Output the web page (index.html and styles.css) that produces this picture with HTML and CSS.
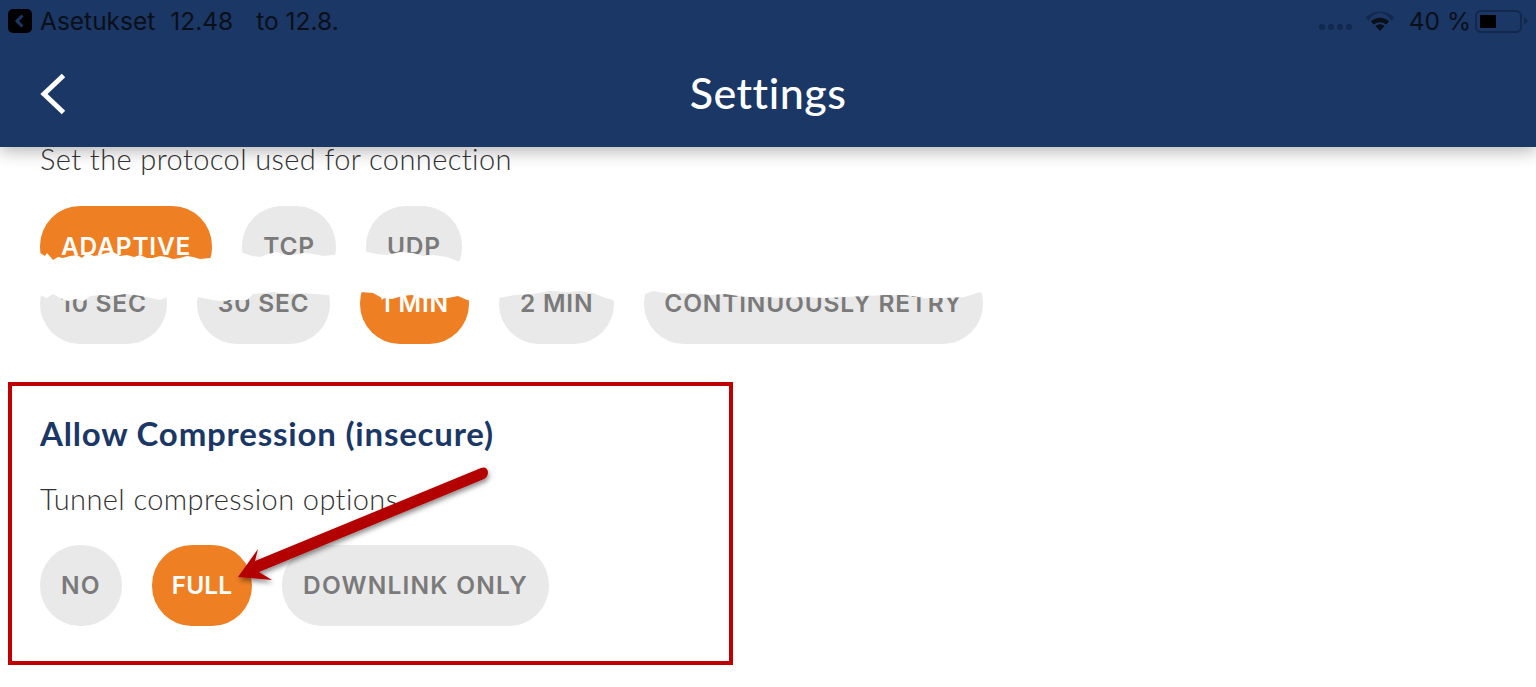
FILE: index.html
```html
<!DOCTYPE html>
<html lang="en">
<head>
  <meta charset="UTF-8">
  <title>Settings</title>
  <link rel="stylesheet" href="styles.css">
</head>
<body>
  <header class="topbar">
    <div class="status">
      <div class="status-left">
        <span class="app-back">
          <svg width="24" height="24" viewBox="0 0 24 24"><path d="M14.5 6.5 9 12l5.500 5.500" fill="none" stroke="#1a3766" stroke-width="3"/></svg>
        </span>
        <span>Asetukset</span>
        <span class="time">12.48</span>
        <span class="note">to 12.8.</span>
      </div>
      <div class="status-right">
        <span class="signal"><i></i><i></i><i></i><i></i></span>
        <svg class="wifi" width="28" height="20" viewBox="0 0 28 20">
          <path d="M0 6.500C8-1.500 20-1.500 28 6.500l-2.600 3C19-.5 9-.5 2.600 9.500z" fill="#12284d"/>
          <path d="M5 10.500c5.500-5 12.500-5 18 0l-3 3c-3.500-3-8.500-3-12 0z" fill="#0a0f18"/>
          <path d="M9.500 15c3-2.300 6-2.300 9 0L14 20z" fill="#0a0f18"/>
        </svg>
        <span class="battery-text">40 %</span>
        <span class="battery"><b></b></span>
      </div>
    </div>
    <nav class="nav">
      <svg class="nav-back" width="26" height="42" viewBox="0 0 26 42"><path d="M23.500 2.500 4 21l19.500 18.500" fill="none" stroke="#fff" stroke-width="5"/></svg>
      <h1>Settings</h1>
    </nav>
  </header>

  <main class="content">
    <p class="desc first">Set the protocol used for connection</p>
    <div class="pills">
      <span class="pill on">ADAPTIVE</span>
      <span class="pill">TCP</span>
      <span class="pill">UDP</span>
    </div>
    <div class="pills second">
      <span class="pill">10 SEC</span>
      <span class="pill">30 SEC</span>
      <span class="pill on">1 MIN</span>
      <span class="pill">2 MIN</span>
      <span class="pill">CONTINUOUSLY RETRY</span>
    </div>

    <section class="box">
      <h2>Allow Compression (insecure)</h2>
      <p class="desc">Tunnel compression options</p>
      <div class="pills">
        <span class="pill">NO</span>
        <span class="pill on full">FULL</span>
        <span class="pill">DOWNLINK ONLY</span>
      </div>
    </section>
  </main>

  <!-- torn edge of the stitched screenshot, and the red arrow on top -->
  <svg class="overlay" width="1536" height="687" viewBox="0 0 1536 687">
    <defs>
      <filter id="arrowShadow" x="-10%" y="-20%" width="120%" height="140%">
        <feDropShadow dx="1" dy="3" stdDeviation="2.500" flood-color="#000" flood-opacity=".45"/>
      </filter>
    </defs>
    <polygon fill="#fff" points="0,262 40,253 45,256 47,253 53,260 58,257 63,258 70,256 77,255 82,258 87,253 94,256 100,255 106,253 113,252 120,256 127,255 134,257 140,255 147,258 153,258 160,256 167,257 173,259 180,258 187,256 193,257 200,259 210,258 214,262 243,253 252,256 260,257 268,254 277,252 285,255 293,255 303,253 313,254 323,256 333,255 367,252 377,254 387,255 400,252 413,253 423,256 433,255 447,257 460,262 1000,262 1000,292 985,296 980,292 965,297 945,298 925,298 905,295 885,295 865,296 845,297 825,298 805,297 785,298 765,297 745,297 725,294 710,295 690,293 670,294 653,291 643,295 613,300 603,297 593,293 580,291 567,292 550,291 533,294 515,295 498,298 467,300 458,296 448,298 436,298 424,299 412,295 402,296 392,299 382,298 373,293 360,292 345,292 327,295 303,293 290,294 273,292 253,294 247,300 230,300 218,301 208,299 197,297 170,296 160,300 146,297 135,295 125,294 113,296 100,295 90,296 84,301 76,299 68,301 60,298 53,294 47,298 40,295 0,300"/>
    <path filter="url(#arrowShadow)" fill="#b30000" d="M238 577 258 549 255 561 481 468Q487 466 488 472 488 477 484 479L259 572 272 580z"/>
  </svg>
</body>
</html>
```

FILE: styles.css
```css
html, body {
  margin: 0;
  height: 687px;
  overflow: hidden;
  background: #fff;
}
body {
  position: relative;
  font-family: "Lato", "Open Sans", sans-serif;
  color: #333;
}
.topbar {
  position: relative;
  z-index: 2;
  height: 147px;
  background: #1a3766;
  box-shadow: 0 4px 16px rgba(0, 0, 0, .3);
}
.status {
  height: 42px;
  padding: 0 14px 0 8px;
  display: flex;
  justify-content: space-between;
  align-items: center;
  font-family: "Inter", "Liberation Sans", sans-serif;
  font-size: 24.5px;
  color: #0a0f18;
}
.status-left, .status-right {
  display: flex;
  align-items: center;
}
.app-back {
  width: 24px;
  height: 24px;
  margin-right: 8px;
  border-radius: 5px;
  background: #000;
}
.app-back svg { display: block; }
.time { margin-left: 15px; }
.note { margin-left: 23px; }
.signal {
  display: flex;
  gap: 3px;
  margin-right: 14px;
  padding-top: 12px;
}
.signal i {
  width: 6px;
  height: 6px;
  border-radius: 50%;
  background: #12284d;
}
.wifi { margin-right: 15px; }
.battery-text { margin-right: 4px; }
.battery {
  position: relative;
  width: 47px;
  height: 23px;
  box-sizing: border-box;
  padding: 3px;
  border: 2px solid #12284d;
  border-radius: 6px;
}
.battery b {
  display: block;
  width: 16px;
  height: 13px;
  background: #000;
}
.battery::after {
  content: "";
  position: absolute;
  right: -8px;
  top: 5px;
  border-left: 4px solid #12284d;
  border-top: 4px solid transparent;
  border-bottom: 4px solid transparent;
}
.nav {
  position: relative;
  height: 105px;
  display: flex;
  justify-content: center;
  align-items: center;
}
.nav-back {
  position: absolute;
  left: 40px;
  top: 31px;
}
.nav h1 {
  margin: 0 0 4px;
  font-size: 43px;
  font-weight: 500;
  letter-spacing: .5px;
  color: #fff;
}
.content {
  padding: 0 8px;
}
.desc {
  margin: 0;
  font-size: 29px;
  font-weight: 300;
  line-height: 34px;
  letter-spacing: .4px;
}
.desc.first {
  margin: -5px 0 0 32px;
}
.pills {
  display: flex;
  gap: 30px;
  margin: 30px 0 0 32px;
}
.pills.second {
  margin-top: -24px;
}
.pill {
  height: 81px;
  box-sizing: border-box;
  padding: 0 21px 2px;
  display: flex;
  align-items: center;
  border-radius: 40px;
  background: #e9e9e9;
  color: #7a7a7a;
  font-family: "Inter", "Open Sans", sans-serif;
  font-size: 24.5px;
  font-weight: 600;
  letter-spacing: .8px;
}
.pills.second .pill {
  padding: 0 20.5px 2px;
}
.pill.on {
  background: #ef7f23;
  color: #fff;
}
.box {
  width: 725px;
  height: 283px;
  box-sizing: border-box;
  margin-top: 38px;
  padding: 29px 28px;
  border: 4px solid #c00000;
}
.box h2 {
  margin: 0;
  font-size: 33px;
  line-height: 36px;
  font-weight: 700;
  letter-spacing: .8px;
  color: #1a3766;
}
.box .desc {
  margin-top: 31px;
}
.box .pills {
  margin: 29px 0 0;
}
.box .pill {
  letter-spacing: 1.2px;
}
.box .pill.full {
  letter-spacing: 0;
  padding: 0 20px 2px;
}
.overlay {
  position: absolute;
  left: 0;
  top: 0;
  z-index: 1;
}
```
